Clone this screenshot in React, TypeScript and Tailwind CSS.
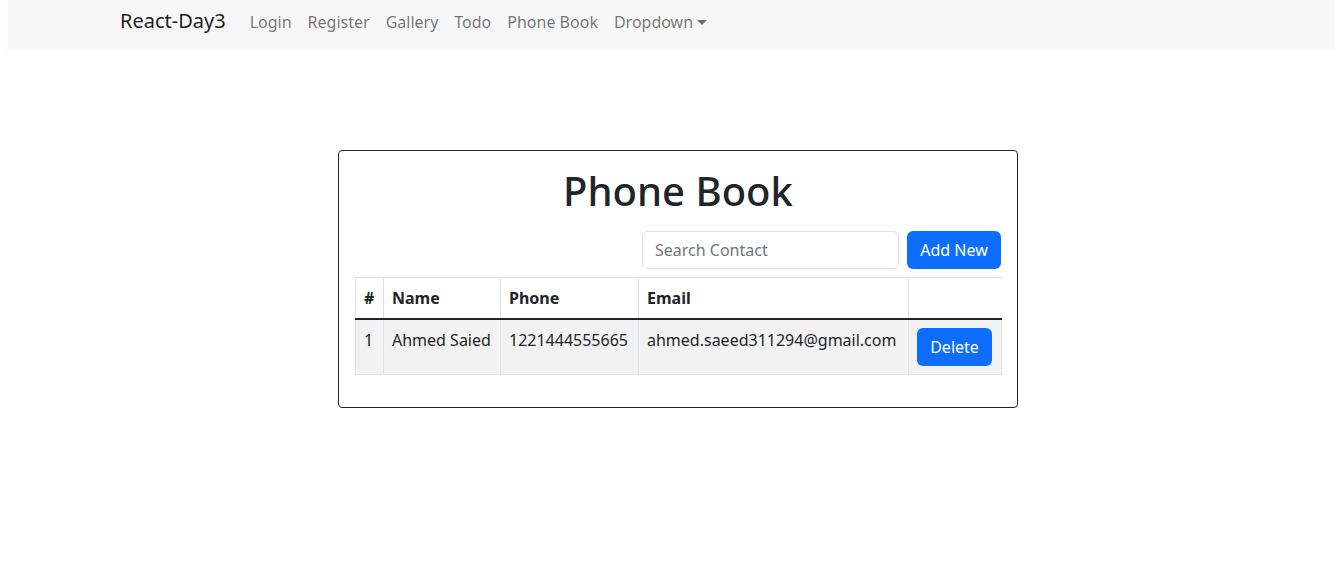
import React from "react";

export default function App() {
  const links = ["Login", "Register", "Gallery", "Todo", "Phone Book"];
  return (
    <div className="min-h-[585px] bg-white text-[#212529]" style={{ fontFamily: '"Noto Sans", sans-serif' }}>
      <nav className="ml-[7px] h-[50px] bg-[#f7f7f7]">
        <div className="flex items-baseline pl-[113px] pt-[9px]">
          <span className="mr-4 text-[20px] leading-6 text-[rgba(0,0,0,0.9)]">React-Day3</span>
          {links.map((l) => (
            <span key={l} className="px-2 text-[16px] leading-6 text-[rgba(0,0,0,0.55)]">
              {l}
            </span>
          ))}
          <span className="flex items-center px-2 text-[16px] leading-6 text-[rgba(0,0,0,0.55)]">
            Dropdown
            <span className="ml-[4px] mt-[1px] inline-block h-0 w-0 border-x-[5px] border-t-[5px] border-x-transparent border-t-[rgba(0,0,0,0.55)]" />
          </span>
        </div>
      </nav>

      <div className="ml-[338px] mt-[100px] w-[680px] rounded-[4px] border border-[#212529] p-4">
        <h1 className="mb-4 text-center text-[40px] leading-[48px] font-medium">Phone Book</h1>
        <div className="mb-2 flex justify-end gap-2">
          <input
            placeholder="Search Contact"
            className="h-[38px] w-[257px] rounded-[6px] border border-[#dee2e6] px-3 text-[16px] outline-none placeholder:text-[#6c757d]"
          />
          <button className="h-[38px] w-[94px] rounded-[6px] bg-[#0d6efd] text-[16px] text-white">Add New</button>
        </div>
        <table className="mb-4 w-[646px] table-fixed border-collapse text-left text-[16px] leading-6">
          <colgroup>
            <col className="w-[28px]" />
            <col className="w-[117px]" />
            <col className="w-[138px]" />
            <col className="w-[270px]" />
            <col className="w-[93px]" />
          </colgroup>
          <thead>
            <tr>
              <th className="border border-[#dee2e6] p-2 font-bold">#</th>
              <th className="border border-[#dee2e6] p-2 font-bold">Name</th>
              <th className="border border-[#dee2e6] p-2 font-bold">Phone</th>
              <th className="border border-[#dee2e6] p-2 font-bold">Email</th>
              <th className="border-t border-l border-[#dee2e6] p-2"></th>
            </tr>
          </thead>
          <tbody className="border-t-2 border-[#212529]">
            <tr className="bg-[#f2f2f2] align-top">
              <td className="border border-[#dee2e6] p-2">1</td>
              <td className="border border-[#dee2e6] p-2 whitespace-nowrap">Ahmed Saied</td>
              <td className="border border-[#dee2e6] p-2">1221444555665</td>
              <td className="border border-[#dee2e6] p-2 whitespace-nowrap">ahmed.saeed311294@gmail.com</td>
              <td className="border border-[#dee2e6] p-2">
                <button className="h-[38px] w-[75px] rounded-[6px] bg-[#0d6efd] text-[16px] text-white">Delete</button>
              </td>
            </tr>
          </tbody>
        </table>
      </div>
    </div>
  );
}
